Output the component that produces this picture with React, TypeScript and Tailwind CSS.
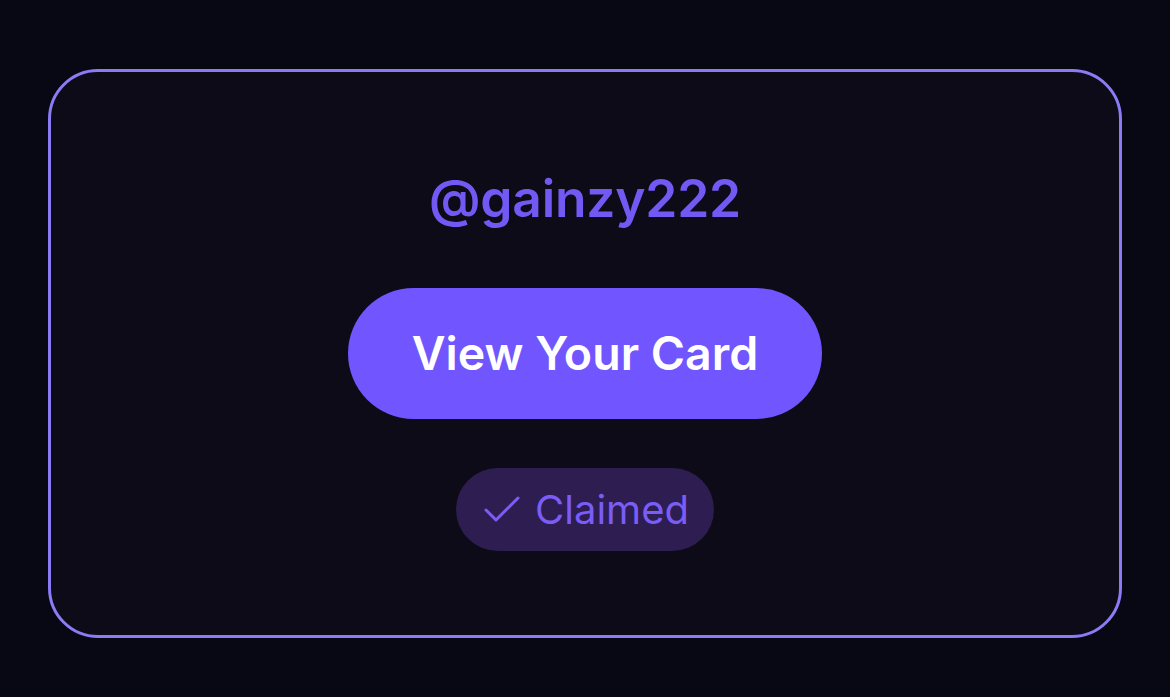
import React from 'react';

export default function App() {
  return (
    <div className="w-[1170px] h-[697px] bg-[#080714] pt-[69px] pl-[48px] font-['Inter',sans-serif]">
      <div className="w-[1074px] h-[569px] rounded-[50px] border-[3px] border-[#8b7bf4] bg-[#0c0b17] flex flex-col items-center pt-[96px]">
        <div className="text-[51.5px] leading-[60px] font-semibold text-[#7359f3] tracking-[-0.2px]">@gainzy222</div>
        <button type="button" className="mt-[60px] w-[474px] h-[131px] rounded-full bg-[#7155ff] text-white text-[46.5px] font-semibold flex items-center justify-center">
          View Your Card
        </button>
        <div className="mt-[49px] h-[83px] pl-[22px] pr-[25px] rounded-full bg-[#2d1d50] flex items-center gap-[9px] text-[#7a5cf6]">
          <svg width="48" height="48" viewBox="0 0 24 24" fill="none" stroke="currentColor" strokeWidth="1.5" strokeLinecap="round" strokeLinejoin="round">
            <path d="M20 6 9 17l-5-5" />
          </svg>
          <span className="text-[40px] leading-none">Claimed</span>
        </div>
      </div>
    </div>
  );
}
